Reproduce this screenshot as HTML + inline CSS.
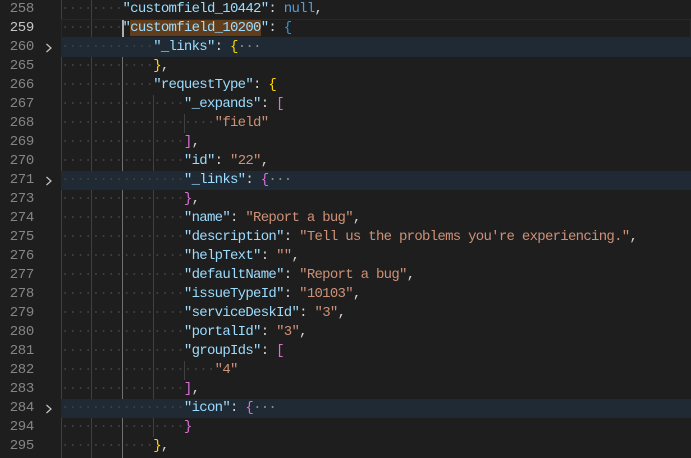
<!DOCTYPE html>
<html><head><meta charset="utf-8"><style>
body{margin:0;background:#1e1e1e;width:691px;height:458px;overflow:hidden;position:relative;font-family:"Liberation Mono",monospace;font-size:14px}
.r{position:absolute;left:0;width:691px;height:19px;line-height:19px;white-space:pre}
.n{position:absolute;left:0;width:34px;text-align:right;color:#858585;font-size:14px;letter-spacing:-0.3px}
.f{position:absolute;left:44px;top:5px}
.c{position:absolute;left:61px;color:#d4d4d4;letter-spacing:-0.72px}
.hl{background:#1f2a35}
.d{color:#3e3e3e}
.k{color:#9cdcfe}.s{color:#ce9178}.nl{color:#569cd6}
.g{color:#ffd700}.p{color:#da70d6}.b{color:#179fff}
.e{color:#8a8a8a}
.gd{position:absolute;width:1px;background:#404040}
.sel{background:#613d1c}
</style></head><body>
<div class="gd" style="left:61px;top:0;height:458px"></div>
<div class="gd" style="left:91px;top:0;height:458px"></div>
<div class="gd" style="left:122px;top:38px;height:420px;background:#707070"></div>
<div class="gd" style="left:153px;top:95px;height:342px"></div>
<div class="gd" style="left:184px;top:114px;height:19px"></div>
<div class="gd" style="left:184px;top:361px;height:19px"></div>
<div class="r" style="top:0"><span class="n">258</span><span class="c"><span class="d">········</span><span class="k">"customfield_10442"</span>: <span class="nl">null</span>,</span></div>
<div class="r" style="top:19px"><div style="position:absolute;left:61px;right:0;top:0;bottom:0;border:1px solid #282828"></div><div style="position:absolute;left:122px;top:1px;width:2px;height:17px;background:#aeafad"></div><span class="n" style="color:#c6c6c6">259</span><span class="c"><span class="d">········</span><span class="k">"<span class="sel">customfield_10200</span>"</span>: <span class="b">{</span></span></div>
<div class="r hl" style="top:38px;left:61px;width:630px"></div>
<div class="r" style="top:38px"><span class="n">260</span><svg class="f" width="10" height="10" viewBox="0 0 10 10"><path d="M2.5 1 L7 5 L2.5 9" fill="none" stroke="#c5c5c5" stroke-width="1.2"/></svg><span class="c"><span class="d">············</span><span class="k">"_links"</span>: <span class="g">{</span><span class="e">···</span></span></div>
<div class="r" style="top:57px"><span class="n">265</span><span class="c"><span class="d">············</span><span class="g">}</span>,</span></div>
<div class="r" style="top:76px"><span class="n">266</span><span class="c"><span class="d">············</span><span class="k">"requestType"</span>: <span class="g">{</span></span></div>
<div class="r" style="top:95px"><span class="n">267</span><span class="c"><span class="d">················</span><span class="k">"_expands"</span>: <span class="p">[</span></span></div>
<div class="r" style="top:114px"><span class="n">268</span><span class="c"><span class="d">····················</span><span class="s">"field"</span></span></div>
<div class="r" style="top:133px"><span class="n">269</span><span class="c"><span class="d">················</span><span class="p">]</span>,</span></div>
<div class="r" style="top:152px"><span class="n">270</span><span class="c"><span class="d">················</span><span class="k">"id"</span>: <span class="s">"22"</span>,</span></div>
<div class="r hl" style="top:171px;left:61px;width:630px"></div>
<div class="r" style="top:171px"><span class="n">271</span><svg class="f" width="10" height="10" viewBox="0 0 10 10"><path d="M2.5 1 L7 5 L2.5 9" fill="none" stroke="#c5c5c5" stroke-width="1.2"/></svg><span class="c"><span class="d">················</span><span class="k">"_links"</span>: <span class="p">{</span><span class="e">···</span></span></div>
<div class="r" style="top:190px"><span class="n">273</span><span class="c"><span class="d">················</span><span class="p">}</span>,</span></div>
<div class="r" style="top:209px"><span class="n">274</span><span class="c"><span class="d">················</span><span class="k">"name"</span>: <span class="s">"Report a bug"</span>,</span></div>
<div class="r" style="top:228px"><span class="n">275</span><span class="c"><span class="d">················</span><span class="k">"description"</span>: <span class="s">"Tell us the problems you're experiencing."</span>,</span></div>
<div class="r" style="top:247px"><span class="n">276</span><span class="c"><span class="d">················</span><span class="k">"helpText"</span>: <span class="s">""</span>,</span></div>
<div class="r" style="top:266px"><span class="n">277</span><span class="c"><span class="d">················</span><span class="k">"defaultName"</span>: <span class="s">"Report a bug"</span>,</span></div>
<div class="r" style="top:285px"><span class="n">278</span><span class="c"><span class="d">················</span><span class="k">"issueTypeId"</span>: <span class="s">"10103"</span>,</span></div>
<div class="r" style="top:304px"><span class="n">279</span><span class="c"><span class="d">················</span><span class="k">"serviceDeskId"</span>: <span class="s">"3"</span>,</span></div>
<div class="r" style="top:323px"><span class="n">280</span><span class="c"><span class="d">················</span><span class="k">"portalId"</span>: <span class="s">"3"</span>,</span></div>
<div class="r" style="top:342px"><span class="n">281</span><span class="c"><span class="d">················</span><span class="k">"groupIds"</span>: <span class="p">[</span></span></div>
<div class="r" style="top:361px"><span class="n">282</span><span class="c"><span class="d">····················</span><span class="s">"4"</span></span></div>
<div class="r" style="top:380px"><span class="n">283</span><span class="c"><span class="d">················</span><span class="p">]</span>,</span></div>
<div class="r hl" style="top:399px;left:61px;width:630px"></div>
<div class="r" style="top:399px"><span class="n">284</span><svg class="f" width="10" height="10" viewBox="0 0 10 10"><path d="M2.5 1 L7 5 L2.5 9" fill="none" stroke="#c5c5c5" stroke-width="1.2"/></svg><span class="c"><span class="d">················</span><span class="k">"icon"</span>: <span class="p">{</span><span class="e">···</span></span></div>
<div class="r" style="top:418px"><span class="n">294</span><span class="c"><span class="d">················</span><span class="p">}</span></span></div>
<div class="r" style="top:437px"><span class="n">295</span><span class="c"><span class="d">············</span><span class="g">}</span>,</span></div>
</body></html>
